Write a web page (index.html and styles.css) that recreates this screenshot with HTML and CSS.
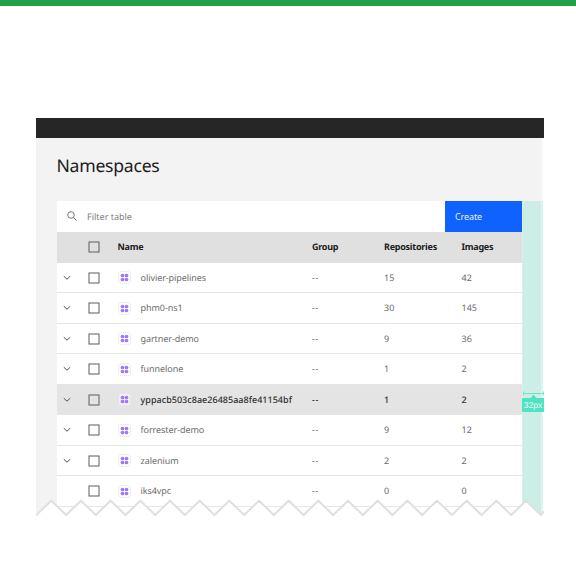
FILE: index.html
```html
<!DOCTYPE html>
<html lang="en">
<head>
<meta charset="utf-8">
<title>Namespaces</title>
<link rel="stylesheet" href="styles.css">
</head>
<body>
<svg class="defs" aria-hidden="true">
  <symbol id="chevron" viewBox="0 0 8 6"><path d="M.8 1.2 4 4.2 7.2 1.2" fill="none" stroke="#505050" stroke-width="1"/></symbol>
  <symbol id="box" viewBox="0 0 12 12"><rect x="1" y="1" width="10" height="10" fill="none" stroke="#5c5c5c" stroke-width="1"/></symbol>
  <symbol id="ns" viewBox="0 0 13 13">
    <rect x=".5" y=".5" width="12" height="12" rx="2.5" fill="#fbfbfb" fill-opacity=".6" stroke="#dcdce2" stroke-width=".7" stroke-dasharray="1.2 .7"/>
    <g fill="#a078ff"><circle cx="4.5" cy="4.5" r="1.85"/><circle cx="8.5" cy="4.5" r="1.85"/><circle cx="4.5" cy="8.5" r="1.85"/><circle cx="8.5" cy="8.5" r="1.85"/></g>
  </symbol>
</svg>
<div class="accent"></div>
<main class="window">
  <div class="topbar"></div>
  <div class="page">
    <h1>Namespaces</h1>
    <div class="content">
      <section class="table">
        <div class="toolbar">
          <svg class="search" viewBox="0 0 10 10"><circle cx="4" cy="4" r="3.3"/><path d="M6.4 6.4 9.6 9.6"/></svg>
          <span class="placeholder">Filter table</span>
          <button class="create">Create</button>
        </div>
        <div class="row head"><i></i><svg class="box"><use href="#box"/></svg><span class="title">Name</span><span>Group</span><span>Repositories</span><span>Images</span></div>
        <div class="row"><svg class="chev"><use href="#chevron"/></svg><svg class="box"><use href="#box"/></svg><svg class="ns"><use href="#ns"/></svg><span class="name">olivier-pipelines</span><span class="none">--</span><span>15</span><span>42</span></div>
        <div class="row"><svg class="chev"><use href="#chevron"/></svg><svg class="box"><use href="#box"/></svg><svg class="ns"><use href="#ns"/></svg><span class="name">phm0-ns1</span><span class="none">--</span><span>30</span><span>145</span></div>
        <div class="row"><svg class="chev"><use href="#chevron"/></svg><svg class="box"><use href="#box"/></svg><svg class="ns"><use href="#ns"/></svg><span class="name">gartner-demo</span><span class="none">--</span><span>9</span><span>36</span></div>
        <div class="row"><svg class="chev"><use href="#chevron"/></svg><svg class="box"><use href="#box"/></svg><svg class="ns"><use href="#ns"/></svg><span class="name">funnelone</span><span class="none">--</span><span>1</span><span>2</span></div>
        <div class="row active"><svg class="chev"><use href="#chevron"/></svg><svg class="box"><use href="#box"/></svg><svg class="ns"><use href="#ns"/></svg><span class="name">yppacb503c8ae26485aa8fe41154bf</span><span class="none">--</span><span>1</span><span>2</span></div>
        <div class="row"><svg class="chev"><use href="#chevron"/></svg><svg class="box"><use href="#box"/></svg><svg class="ns"><use href="#ns"/></svg><span class="name">forrester-demo</span><span class="none">--</span><span>9</span><span>12</span></div>
        <div class="row"><svg class="chev"><use href="#chevron"/></svg><svg class="box"><use href="#box"/></svg><svg class="ns"><use href="#ns"/></svg><span class="name">zalenium</span><span class="none">--</span><span>2</span><span>2</span></div>
        <div class="row"><i></i><svg class="box"><use href="#box"/></svg><svg class="ns"><use href="#ns"/></svg><span class="name">iks4vpc</span><span class="none">--</span><span>0</span><span>0</span></div>
      </section>
      <div class="spacer">
        <div class="measure">
          <svg class="bracket" viewBox="0 0 22 8"><path d="M1.5 .5v4M21.5 .5v4M1.5 2.5h20" fill="none" stroke="#5de0c3" stroke-width=".8"/><path d="M8 8 11.5 3.5 15 8z" fill="#4fe3c1"/></svg>
          <span class="tag">32px</span>
        </div>
      </div>
    </div>
  </div>
  <svg class="tear" viewBox="0 0 508 21">
    <path class="paper" d="M0 16.2.5 16 15.3 1.7 30.1 16 45 1.7 59.8 16 74.6 1.7 89.5 16 104.3 1.7 119.2 16 134 1.7 148.8 16 163.7 1.7 178.5 16 193.3 1.7 208.2 16 223 1.7 237.8 16 252.7 1.7 267.5 16 282.3 1.7 297.2 16 312 1.7 326.8 16 341.7 1.7 356.5 16 371.4 1.7 386.2 16 401 1.7 415.9 16 430.7 1.7 445.5 16 460.4 1.7 475.2 16 490 1.7 504.8 16 508 12.5V21H0z"/>
    <path class="edge" d="M0 16.2.5 16 15.3 1.7 30.1 16 45 1.7 59.8 16 74.6 1.7 89.5 16 104.3 1.7 119.2 16 134 1.7 148.8 16 163.7 1.7 178.5 16 193.3 1.7 208.2 16 223 1.7 237.8 16 252.7 1.7 267.5 16 282.3 1.7 297.2 16 312 1.7 326.8 16 341.7 1.7 356.5 16 371.4 1.7 386.2 16 401 1.7 415.9 16 430.7 1.7 445.5 16 460.4 1.7 475.2 16 490 1.7 504.8 16 508 12.5"/>
  </svg>
</main>
</body>
</html>
```
FILE: styles.css
```css
* { box-sizing: border-box; }
body { margin: 0; background: #fff; color: #202020; font-family: "Noto Sans", sans-serif; text-rendering: geometricPrecision; }
.defs { position: absolute; width: 0; height: 0; }
.accent { height: 6px; background: #24a148; }
.window { position: relative; width: 508px; height: 402px; margin: 112px 0 0 36px; overflow: hidden; }
.topbar { height: 20px; background: #262626; }
.page { width: 507px; height: 382px; padding-left: 20.5px; background: #f3f3f3; border-right: 2px solid #f8f8f8; }
h1 { height: 63px; margin: 0; padding-top: 16px; font-size: 17.6px; line-height: 24px; font-weight: 400; letter-spacing: -.25px; }
.content { display: flex; }
.table { flex: none; width: 465.5px; height: 320px; background: #fff; }
.toolbar { display: flex; align-items: center; height: 30.5px; padding-left: 10px; }
.search { width: 10px; height: 10px; fill: none; stroke: #6a6a6a; stroke-width: .9; }
.placeholder { margin-left: 10.5px; font-size: 9px; color: #808080; letter-spacing: 0; }
.create { width: 77.5px; height: 30.5px; margin-left: auto; padding: 1px 0 0 10.5px; border: 0; background: #0f62fe; color: #e7efff; font: 9px "Noto Sans", sans-serif; letter-spacing: -.1px; text-align: left; }
.row { display: grid; grid-template-columns: 31px 29px 24px 171.5px 72px 77.5px 60.5px; align-items: center; height: 30.5px; padding-top: 1px; border-bottom: 1px solid #e6e6e6; font-size: 9px; line-height: 12px; color: #6c6c6c; }
.head { height: 31px; background: #e0e0e0; border-color: #e0e0e0; color: #202020; font-weight: 700; letter-spacing: -.25px; }
.title { grid-column: 3 / 5; padding-left: 1px; }
.name { letter-spacing: -.07px; }
.none { letter-spacing: .7px; }
.active { background: #e4e4e4; color: #303030; font-weight: 500; }
.active .name { letter-spacing: .03px; }
.chev { width: 8px; height: 6px; margin-left: 6px; }
.box { width: 12px; height: 12px; }
.ns { width: 13px; height: 13px; margin-left: 1px; }
.spacer { position: relative; flex: none; width: 21px; height: 320px; background: #cceee7; border-left: 1px solid #d9f1ec; border-right: 2px solid #daf8f1; }
.measure { position: absolute; left: -1px; top: 190px; width: 22px; }
.bracket { display: block; width: 22px; height: 8px; }
.tag { display: block; width: 23px; height: 14px; margin: -1px 0 0 -.5px; border-radius: 1px; background: #4fe3c1; color: #effffb; font: 8.5px/14.5px "Liberation Sans", sans-serif; text-align: center; }
.tear { position: absolute; left: 0; bottom: 0; width: 508px; height: 21px; }
.paper { fill: #fff; }
.edge { fill: none; stroke: #e0e0e0; stroke-width: 2; }
```
